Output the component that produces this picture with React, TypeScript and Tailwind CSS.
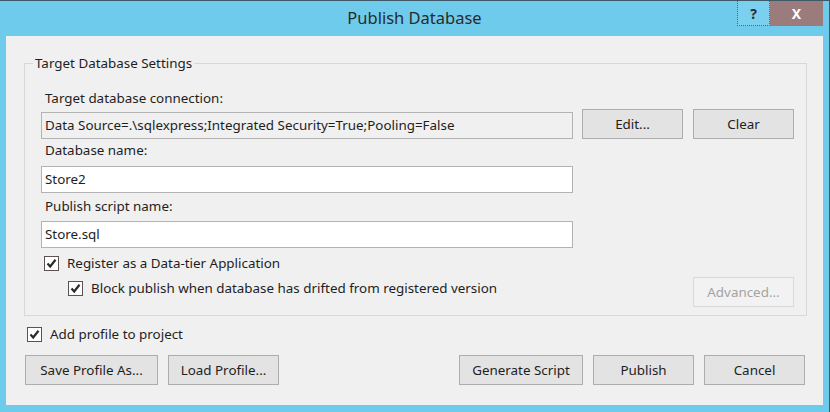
import React from "react";

const font = { fontFamily: '"Noto Sans", "Segoe UI", sans-serif' };

function CheckBox() {
  return (
    <span className="flex h-[15px] w-[15px] shrink-0 items-center justify-center border border-[#5c5252] bg-white">
      <svg width="11" height="11" viewBox="0 0 11 11">
        <path d="M1.5 5.5 L4.2 8.5 L9.5 1.8" fill="none" stroke="#2b2b2b" strokeWidth="2.2" />
      </svg>
    </span>
  );
}

function Btn({ children, w, disabled }: { children: React.ReactNode; w: string; disabled?: boolean }) {
  return (
    <button
      className={
        disabled
          ? `${w} h-[30px] shrink-0 border border-[#d9d9d9] bg-[#f2f2f2] text-[13.4px] text-[#a3a3a3]`
          : `${w} h-[30px] shrink-0 border border-[#adadad] bg-[#e3e3e3] text-[13.4px] text-[#1e1e1e]`
      }
    >
      {children}
    </button>
  );
}

export default function App() {
  return (
    <div className="flex h-[412px] w-[830px] flex-col border-t border-r border-[#3f5a66] bg-[#6ecbeb]" style={font}>
      <div className="relative flex h-[35px] shrink-0 items-center justify-center">
        <span className="text-[16.5px] text-[#2a2a2a]">Publish Database</span>
        <div className="absolute right-[6px] top-0 flex h-[25px]">
          <div className="flex w-[33px] items-center justify-center border border-dotted border-[#3d6b7a] border-t-0 bg-[#7ad0ee] text-[14px] font-bold text-[#2d2d2d]">?</div>
          <div className="flex w-[53px] items-center justify-center bg-[#9b7b7b] text-[14px] font-bold text-white">X</div>
        </div>
      </div>
      <div className="ml-[6px] mr-[6px] flex h-[369px] flex-col bg-[#f0f0f0]">
        <fieldset className="ml-[18px] mr-[16px] mt-[17px] border border-[#d8d8d8] pb-[8px] pl-[16px] pr-[12px]">
          <legend className="ml-[-8px] px-[2px] text-[13.4px] leading-[20px] text-[#1e1e1e]">Target Database Settings</legend>
          <div className="mt-[15px] pl-[4px] text-[13.4px] leading-[20px] text-[#1e1e1e]">Target database connection:</div>
          <div className="mt-[1px] flex items-end">
            <div className="flex h-[27px] w-[532px] items-center border border-[#b3b3b3] bg-[#f0f0f0] pl-[3px] text-[13.4px] text-[#1e1e1e]">
              Data Source=.\sqlexpress;Integrated Security=True;Pooling=False
            </div>
            <div className="ml-auto flex gap-[10px]">
              <Btn w="w-[101px]">Edit...</Btn>
              <Btn w="w-[101px]">Clear</Btn>
            </div>
          </div>
          <div className="mt-[1px] pl-[4px] text-[13.4px] leading-[20px] text-[#1e1e1e]">Database name:</div>
          <div className="mt-[6px] flex h-[27px] w-[532px] items-center border border-[#b3b3b3] bg-white pl-[3px] text-[13.4px] text-[#1e1e1e]">Store2</div>
          <div className="mt-[3px] pl-[4px] text-[13.4px] leading-[20px] text-[#1e1e1e]">Publish script name:</div>
          <div className="mt-[5px] flex h-[27px] w-[532px] items-center border border-[#b3b3b3] bg-white pl-[3px] text-[13.4px] text-[#1e1e1e]">Store.sql</div>
          <div className="mt-[5px] flex h-[20px] items-center gap-[8px] pl-[3px] text-[13.4px] text-[#1e1e1e]">
            <CheckBox />
            <span>Register as a Data-tier Application</span>
          </div>
          <div className="mt-[4px] flex items-start justify-between">
            <div className="mt-[1px] flex h-[20px] items-center gap-[8px] pl-[27px] text-[13.4px] text-[#1e1e1e]">
              <CheckBox />
              <span>Block publish when database has drifted from registered version</span>
            </div>
            <Btn w="w-[101px]" disabled>
              Advanced...
            </Btn>
          </div>
        </fieldset>
        <div className="ml-[21px] mt-[8px] flex h-[20px] items-center gap-[8px] text-[13.4px] text-[#1e1e1e]">
          <CheckBox />
          <span>Add profile to project</span>
        </div>
        <div className="ml-[19px] mr-[18px] mt-[11px] flex">
          <div className="flex gap-[10px]">
            <Btn w="w-[133px]">Save Profile As...</Btn>
            <Btn w="w-[111px]">Load Profile...</Btn>
          </div>
          <div className="ml-auto flex gap-[10px]">
            <Btn w="w-[124px]">Generate Script</Btn>
            <Btn w="w-[101px]">Publish</Btn>
            <Btn w="w-[101px]">Cancel</Btn>
          </div>
        </div>
      </div>
    </div>
  );
}
